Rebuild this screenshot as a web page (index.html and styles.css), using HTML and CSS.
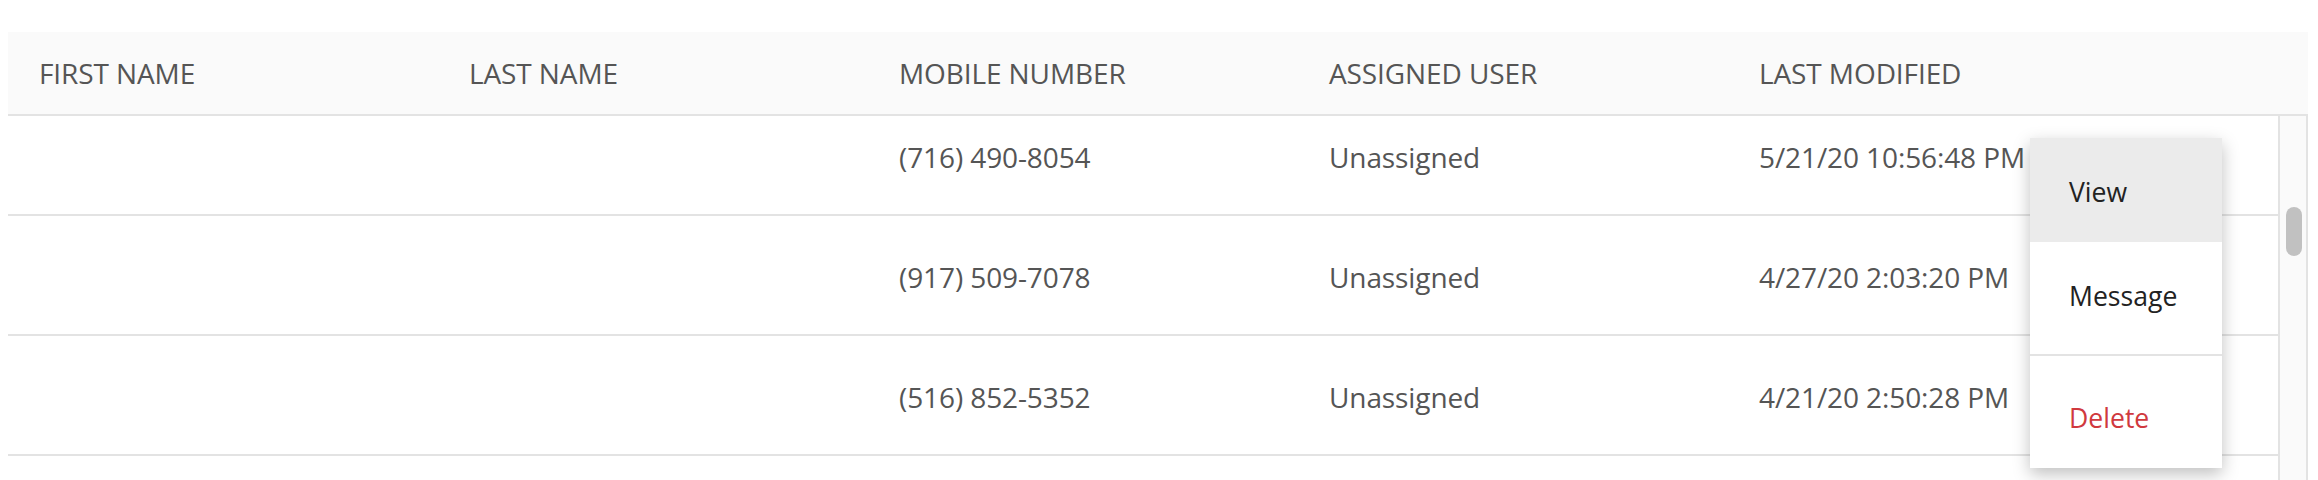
FILE: index.html
```html
<!DOCTYPE html>
<html lang="en">
<head>
<meta charset="utf-8">
<title>Contacts</title>
<link rel="stylesheet" href="styles.css">
</head>
<body>
<div class="page">
  <div class="table">
    <div class="thead">
      <div class="th">FIRST NAME</div>
      <div class="th">LAST NAME</div>
      <div class="th">MOBILE NUMBER</div>
      <div class="th">ASSIGNED USER</div>
      <div class="th">LAST MODIFIED</div>
      <div class="th"></div>
    </div>
    <div class="tbody-wrap">
      <div class="tbody">
        <div class="tr">
          <div class="td"></div>
          <div class="td"></div>
          <div class="td">(716) 490-8054</div>
          <div class="td">Unassigned</div>
          <div class="td">5/21/20 10:56:48 PM</div>
          <div class="td"></div>
        </div>
        <div class="tr">
          <div class="td"></div>
          <div class="td"></div>
          <div class="td">(917) 509-7078</div>
          <div class="td">Unassigned</div>
          <div class="td">4/27/20 2:03:20 PM</div>
          <div class="td"></div>
        </div>
        <div class="tr">
          <div class="td"></div>
          <div class="td"></div>
          <div class="td">(516) 852-5352</div>
          <div class="td">Unassigned</div>
          <div class="td">4/21/20 2:50:28 PM</div>
          <div class="td"></div>
        </div>
        <div class="tr">
          <div class="td"></div>
          <div class="td"></div>
          <div class="td"></div>
          <div class="td"></div>
          <div class="td"></div>
          <div class="td"></div>
        </div>
      </div>
      <div class="scrollbar"><div class="thumb"></div></div>
    </div>
  </div>
  <div class="menu">
    <div class="menu-item active">View</div>
    <div class="menu-item">Message</div>
    <div class="menu-sep"></div>
    <div class="menu-item danger">Delete</div>
  </div>
</div>
</body>
</html>
```

FILE: styles.css
```css
html, body {
  margin: 0;
  background: #ffffff;
}

body {
  font-family: "Open Sans", "DejaVu Sans", sans-serif;
}

.page {
  position: relative;
  height: 480px;
  box-sizing: border-box;
  padding: 32px 8px 0 8px;
  overflow: hidden;
}

.table {
  width: 2300px;
}

.thead {
  display: grid;
  grid-template-columns: repeat(5, 430px) 1fr;
  background: #fafafa;
  border-bottom: 2px solid #e3e3e3;
}

.th {
  padding: 21px 31px;
  font-size: 28px;
  line-height: 40px;
  letter-spacing: -0.1px;
  color: #555555;
  white-space: nowrap;
}

.tbody-wrap {
  display: flex;
  height: 364px;
  overflow: hidden;
}

.tbody {
  flex: 1;
  min-width: 0;
  margin-top: -20px;
}

.tr {
  display: grid;
  grid-template-columns: repeat(5, 430px) 1fr;
  border-bottom: 2px solid #e3e3e3;
}

.td {
  padding: 41px 31px 37px 31px;
  font-size: 28px;
  line-height: 40px;
  height: 40px;
  letter-spacing: -0.1px;
  color: #555555;
  white-space: nowrap;
}

.scrollbar {
  flex: none;
  width: 26px;
  border-left: 2px solid #e3e3e3;
  border-right: 2px solid #e3e3e3;
  background: #fafafa;
}

.thumb {
  width: 16px;
  height: 49px;
  margin: 91px 0 0 6px;
  border-radius: 8px;
  background: #c1c1c1;
}

.menu {
  position: absolute;
  left: 2030px;
  top: 138px;
  width: 192px;
  background: #ffffff;
  box-shadow: 0 6px 16px rgba(0, 0, 0, 0.25);
}

.menu-item {
  padding: 34px 20px 30px 39px;
  font-size: 26.6px;
  line-height: 40px;
  color: #222222;
  white-space: nowrap;
}

.menu-item.active {
  background: #ebebeb;
}

.menu-item.danger {
  color: #d0393e;
}

.menu-sep {
  height: 2px;
  margin: 8px 0;
  background: #e3e3e3;
}
```
